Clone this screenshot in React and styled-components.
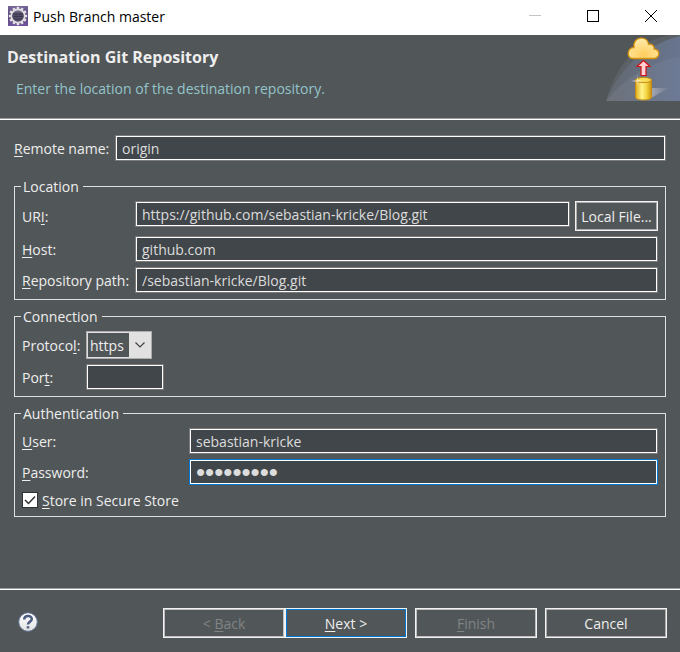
import React from "react";
import styled, { createGlobalStyle, css } from "styled-components";

const color = {
  surface: "#515658",
  field: "#41464a",
  text: "#eeeeee",
  fieldText: "#dcdcdc",
  muted: "#808486",
  line: "#e0e0e0",
  accent: "#0078d7",
  hint: "#93c4cb",
};

const GlobalStyle = createGlobalStyle`
  *, *::before, *::after { box-sizing: border-box; }
  body {
    margin: 0;
    background: ${color.surface};
    color: ${color.text};
    font: 14px/20px "Open Sans", "Noto Sans", sans-serif;
  }
  button, input, select { font: inherit; }
  u { text-underline-offset: 2px; text-decoration-thickness: 1px; text-decoration-skip-ink: none; }
`;

const Dialog = styled.div`
  display: flex;
  flex-direction: column;
  min-height: 100vh;
`;

const TitleBar = styled.div`
  display: flex;
  align-items: center;
  height: 35px;
  padding: 0 0 3px 8px;
  gap: 5px;
  background: #fff;
  color: #000;
`;

const WindowTitle = styled.span`
  flex: 1;
  padding-top: 2px;
`;

const WindowControls = styled.div`
  display: flex;
`;

const WindowButton = styled.button`
  display: grid;
  place-items: center;
  width: 58px;
  height: 32px;
  padding: 0;
  border: 0;
  background: none;
`;

const Header = styled.header`
  display: flex;
  justify-content: space-between;
  height: 85px;
  border-bottom: 1px solid #fff;
  box-shadow: inset 0 -1px #9a9c9d;
`;

const HeaderText = styled.div`
  padding: 12px 0 0 7px;
`;

const Heading = styled.h1`
  margin: 0;
  font-size: 16px;
  line-height: 20px;
  font-weight: 700;
`;

const Message = styled.p`
  margin: 12px 0 0 9px;
  color: ${color.hint};
`;

const Form = styled.main`
  flex: 1;
  display: flex;
  flex-direction: column;
  padding: 15px 14px;
`;

const Group = styled.fieldset`
  min-width: 0;
  margin: 0 0 6px;
  padding: 4px 7px 6px;
  border: 1px solid ${color.line};
`;

const Legend = styled.legend`
  margin-left: -1px;
  padding: 0 4px 0 2px;
  line-height: 21px;
`;

const Rows = styled.div`
  display: grid;
  gap: 5px;
`;

const Row = styled.div`
  display: grid;
  grid-template-columns: ${(p) => p.$label}px ${(p) => p.$columns || "1fr"};
  align-items: center;
  margin-bottom: ${(p) => p.$after || 0}px;
`;

const Label = styled.label`
  padding-top: 2px;
  white-space: nowrap;
`;

const TextField = styled.input`
  width: ${(p) => (p.$width ? `${p.$width}px` : "100%")};
  min-width: 0;
  height: 26px;
  padding: 0 6px;
  border: 1px solid #7a7a7a;
  box-shadow: inset 0 0 0 1px #fff;
  border-radius: 0;
  background: ${color.field};
  color: ${color.fieldText};
  outline: none;
  align-self: start;
`;

const PasswordField = styled(TextField)`
  border-color: ${color.accent};
  font-family: "Liberation Sans", sans-serif;
  font-size: 26px;
  line-height: 24px;
`;

const Combo = styled.div`
  display: grid;
  grid-template-columns: 1fr 22px;
  width: 66px;
  height: 28px;
  border: 1px solid #adadad;
`;

const Select = styled.select`
  grid-area: 1 / 1 / 2 / 3;
  appearance: none;
  padding: 2px 22px 0 2px;
  border: 1px solid #e1e1e1;
  border-radius: 0;
  background: ${color.surface};
  color: ${color.text};
  outline: none;
`;

const ComboArrow = styled.span`
  grid-area: 1 / 2;
  display: grid;
  place-items: center;
  background: #e1e1e1;
  pointer-events: none;
`;

const CheckRow = styled.label`
  display: flex;
  align-items: center;
  gap: 4px;
  height: 20px;
`;

const CheckCell = styled.span`
  display: grid;
  width: 16px;
  height: 16px;
`;

const CheckText = styled.span`
  padding-top: 2px;
`;

const CheckBox = styled.input`
  grid-area: 1 / 1;
  appearance: none;
  width: 16px;
  height: 16px;
  margin: 0;
  border: 1px solid #333;
  background: #fff;
`;

const CheckMark = styled.svg`
  grid-area: 1 / 1;
  pointer-events: none;
  visibility: hidden;
  ${CheckBox}:checked + & { visibility: visible; }
`;

const Button = styled.button`
  width: ${(p) => p.$width}px;
  height: 30px;
  padding: 2px 0 0;
  border: 1px solid #f2f2f2;
  box-shadow: inset 0 0 0 1px #adadad;
  background: ${color.surface};
  color: ${color.text};
  white-space: nowrap;
  &:disabled {
    color: ${color.muted};
    box-shadow: inset 0 0 0 1px #bfbfbf;
  }
  ${(p) =>
    p.$primary &&
    css`
      box-shadow: inset 0 0 0 1px ${color.accent};
    `}
`;

const LocalFileButton = styled(Button)`
  margin-left: 5px;
`;

const Footer = styled.footer`
  display: flex;
  align-items: center;
  justify-content: space-between;
  height: 64px;
  padding: 4px 13px 0 18px;
  border-top: 1px solid #9a9c9d;
  box-shadow: inset 0 1px #fff;
`;

const HelpButton = styled.button`
  display: flex;
  align-items: flex-start;
  height: 22px;
  padding: 0;
  border: 0;
  background: none;
`;

const Actions = styled.div`
  display: flex;
  gap: 8px;
`;

const Pager = styled.div`
  display: flex;
`;

const AppIcon = () => {
  const teeth = Array.from({ length: 12 }, (_, i) => i * 30);
  return (
    <svg width="20" height="20" viewBox="0 0 20 20" aria-hidden="true">
      <defs>
        <linearGradient id="app" x1="0" y1="0" x2="0" y2="1">
          <stop offset="0" stopColor="#77669a" />
          <stop offset=".5" stopColor="#574579" />
          <stop offset="1" stopColor="#70559f" />
        </linearGradient>
        <linearGradient id="core" x1="0" y1="0" x2="0" y2="1">
          <stop offset="0" stopColor="#8c86a0" />
          <stop offset=".45" stopColor="#343047" />
          <stop offset="1" stopColor="#59516e" />
        </linearGradient>
      </defs>
      <rect width="20" height="20" fill="url(#app)" />
      {teeth.map((a) => (
        <rect key={a} x="8.7" y="0.8" width="2.6" height="3.5" fill="#e4e2e2" transform={`rotate(${a} 10 10)`} />
      ))}
      <circle cx="10" cy="10" r="6.7" fill="url(#core)" stroke="#dedce0" strokeWidth="1.8" />
      <path d="M5 9.5h10M5 11.5h10" stroke="#615b78" strokeWidth=".7" />
    </svg>
  );
};

const Banner = () => (
  <svg width="75" height="66" viewBox="0 0 75 66" aria-hidden="true">
    <defs>
      <linearGradient id="sweep" x1="0" x2="1">
        <stop offset="0" stopColor="#62686f" />
        <stop offset="1" stopColor="#68758f" />
      </linearGradient>
      <linearGradient id="sweepFront" x1="0" x2="1">
        <stop offset="0" stopColor="#6d7179" />
        <stop offset="1" stopColor="#6d7a96" />
      </linearGradient>
      <radialGradient id="cloud" cx=".5" cy=".8" r=".8">
        <stop offset="0" stopColor="#ffce5e" />
        <stop offset="1" stopColor="#ffedae" />
      </radialGradient>
      <linearGradient id="drum" x1="0" x2="1">
        <stop offset="0" stopColor="#dfa916" />
        <stop offset=".4" stopColor="#fff48a" />
        <stop offset=".7" stopColor="#f3d33f" />
        <stop offset="1" stopColor="#cb9210" />
      </linearGradient>
      <linearGradient id="shade" x1="0" x2="1">
        <stop offset="0" stopColor="#a7abb5" />
        <stop offset="1" stopColor="#828a9b" stopOpacity=".3" />
      </linearGradient>
    </defs>
    <path d="M75 0H65C36 5 12 26 1 66H75Z" fill="#5b6166" />
    <path d="M75 1C38 11 14 34 1 66H75Z" fill="url(#sweep)" />
    <path d="M75 22C48 26 20 42 1 66H75Z" fill="url(#sweepFront)" />
    <path d="M46 53H64L46 63Z" fill="url(#shade)" />
    <path
      d="M28 23.5C21 23.5 22 12.5 29 12.5C27.5 0.5 43.5 0.5 43.5 9.5C47 8.5 49.5 11 49 14C56 15 55 23.5 48 23.5Z"
      fill="url(#cloud)"
      stroke="#d69311"
      strokeWidth="1.3"
    />
    <path d="M38.5 25.5L45 31.5H41V40.5H36V31.5H32Z" fill="#ffcfd3" stroke="#cf1118" strokeWidth="1.2" />
    <path d="M30.5 45V62.5C30.5 65.8 46.5 65.8 46.5 62.5V45Z" fill="url(#drum)" stroke="#c28a12" />
    <ellipse cx="38.5" cy="45" rx="8" ry="2.6" fill="#f6dc57" stroke="#c28a12" />
    <path d="M32.5 39L33 45L38 46L33 47L32.5 52L32 47L26 46L32 45Z" fill="#fff" opacity=".5" />
  </svg>
);

const HelpIcon = () => (
  <svg width="20" height="20" viewBox="0 0 20 20" aria-hidden="true">
    <defs>
      <linearGradient id="help" x1="0" y1="0" x2="0" y2="1">
        <stop offset="0" stopColor="#ffffff" />
        <stop offset="1" stopColor="#e2e2e2" />
      </linearGradient>
    </defs>
    <circle cx="10" cy="10" r="9.3" fill="url(#help)" stroke="#5f7093" />
    <path d="M6.2 7.6C6.2 3 13.8 3 13.8 7C13.8 9.7 10 9.6 10 12.6" fill="none" stroke="#4d5c80" strokeWidth="2.5" />
    <rect x="8.7" y="14.2" width="2.6" height="2.3" fill="#4d5c80" />
  </svg>
);

export default function App() {
  return (
    <>
      <GlobalStyle />
      <Dialog role="dialog" aria-label="Push Branch master">
        <TitleBar>
          <AppIcon />
          <WindowTitle>Push Branch master</WindowTitle>
          <WindowControls>
            <WindowButton aria-label="Minimize" disabled>
              <svg width="12" height="12" shapeRendering="crispEdges"><path d="M0 5.5H12" stroke="#c4c4c4" /></svg>
            </WindowButton>
            <WindowButton aria-label="Maximize">
              <svg width="12" height="12" shapeRendering="crispEdges"><path d="M.5 .5H11.5V11.5H.5Z" fill="none" stroke="#000" /></svg>
            </WindowButton>
            <WindowButton aria-label="Close">
              <svg width="12" height="12"><path d="M0 0L12 12M12 0L0 12" stroke="#000" /></svg>
            </WindowButton>
          </WindowControls>
        </TitleBar>

        <Header>
          <HeaderText>
            <Heading>Destination Git Repository</Heading>
            <Message>Enter the location of the destination repository.</Message>
          </HeaderText>
          <Banner />
        </Header>

        <Form>
          <Row $label={101} $after={15}>
            <Label htmlFor="remote"><u>R</u>emote name:</Label>
            <TextField id="remote" defaultValue="origin" />
          </Row>

          <Group>
            <Legend>Location</Legend>
            <Rows>
              <Row $label={113} $columns="1fr 88px">
                <Label htmlFor="uri">UR<u>I</u>:</Label>
                <TextField id="uri" defaultValue="https://github.com/sebastian-kricke/Blog.git" />
                <LocalFileButton $width={83}>Local File...</LocalFileButton>
              </Row>
              <Row $label={113}>
                <Label htmlFor="host"><u>H</u>ost:</Label>
                <TextField id="host" defaultValue="github.com" />
              </Row>
              <Row $label={113}>
                <Label htmlFor="path"><u>R</u>epository path:</Label>
                <TextField id="path" defaultValue="/sebastian-kricke/Blog.git" />
              </Row>
            </Rows>
          </Group>

          <Group>
            <Legend>Connection</Legend>
            <Rows>
              <Row $label={64}>
                <Label htmlFor="protocol">Protoco<u>l</u>:</Label>
                <Combo>
                  <Select id="protocol" defaultValue="https">
                    <option>https</option>
                    <option>ssh</option>
                  </Select>
                  <ComboArrow>
                    <svg width="10" height="6"><path d="M.5 .5L5 5L9.5 .5" fill="none" stroke="#404040" strokeWidth="1.2" /></svg>
                  </ComboArrow>
                </Combo>
              </Row>
              <Row $label={64}>
                <Label htmlFor="port">Por<u>t</u>:</Label>
                <TextField id="port" $width={78} />
              </Row>
            </Rows>
          </Group>

          <Group>
            <Legend>Authentication</Legend>
            <Rows>
              <Row $label={167}>
                <Label htmlFor="user"><u>U</u>ser:</Label>
                <TextField id="user" defaultValue="sebastian-kricke" />
              </Row>
              <Row $label={167}>
                <Label htmlFor="password"><u>P</u>assword:</Label>
                <PasswordField id="password" type="password" defaultValue="passwords" />
              </Row>
              <CheckRow>
                <CheckCell>
                  <CheckBox type="checkbox" defaultChecked />
                  <CheckMark width="16" height="16"><path d="M3 8L6.5 11.5L13 4.5" fill="none" stroke="#333" strokeWidth="1.5" /></CheckMark>
                </CheckCell>
                <CheckText><u>S</u>tore in Secure Store</CheckText>
              </CheckRow>
            </Rows>
          </Group>
        </Form>

        <Footer>
          <HelpButton aria-label="Help"><HelpIcon /></HelpButton>
          <Actions>
            <Pager>
              <Button $width={122} disabled>&lt; <u>B</u>ack</Button>
              <Button $width={122} $primary><u>N</u>ext &gt;</Button>
            </Pager>
            <Button $width={122} disabled><u>F</u>inish</Button>
            <Button $width={122}>Cancel</Button>
          </Actions>
        </Footer>
      </Dialog>
    </>
  );
}
